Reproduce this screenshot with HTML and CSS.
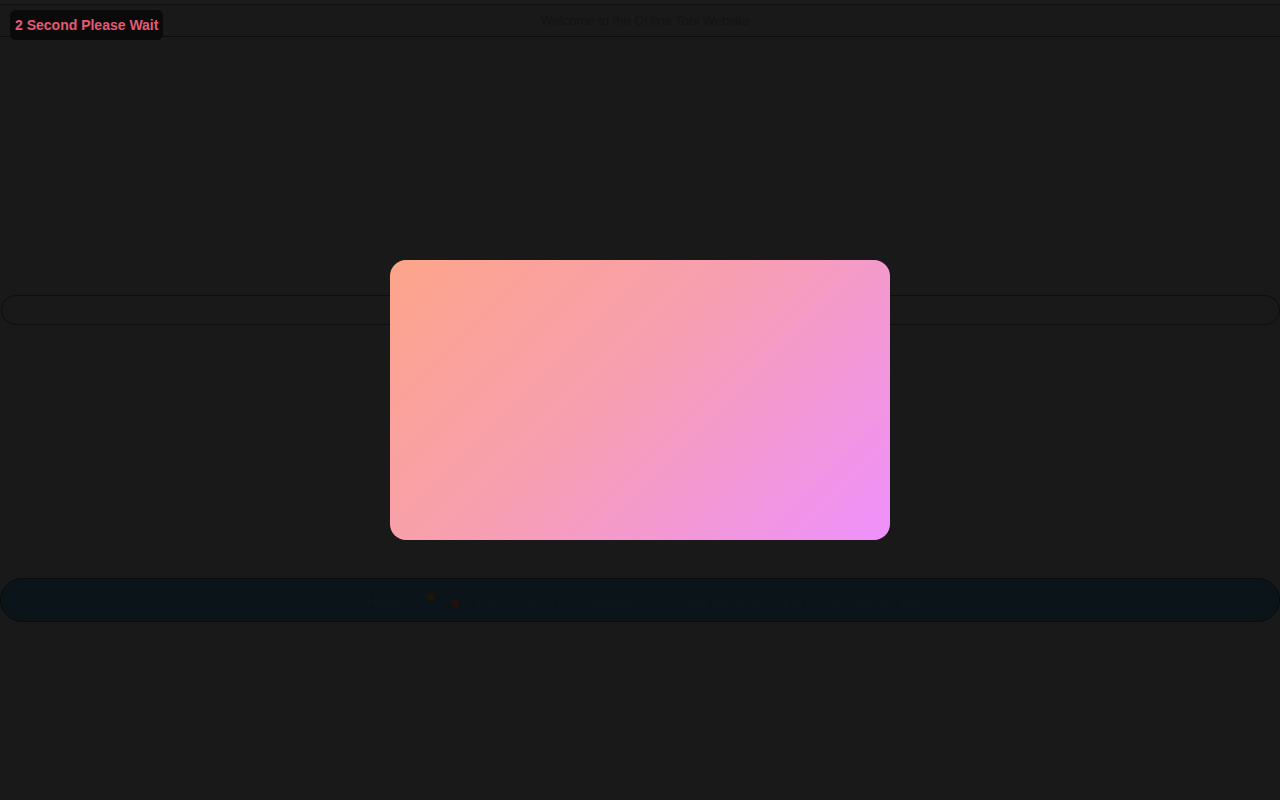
FILE: index.html
```html
<!DOCTYPE html>
<html lang="en">
<head>
<meta charset="utf-8">
<title>Please Wait</title>
<link rel="stylesheet" href="styles.css">
</head>
<body>
<div class="page">
  <div class="topstrip"></div>
  <header class="header">
    <span class="header-title">Welcome to the Online Tool Website</span>
  </header>
  <main class="content">
    <div class="hero"></div>
    <div class="search-pill"></div>
    <div class="spacer"></div>
    <div class="marquee-pill">
      <span class="marquee-text">Hello</span>
      <span class="dot dot-a"></span><span class="dot dot-b"></span>
      <span class="marquee-text">Welcome to our website, enjoy free tools and quick downloads here</span>
    </div>
  </main>
</div>
<div class="overlay"></div>
<div class="modal"></div>
<div class="wait-badge">2 Second Please Wait</div>
</body>
</html>
```
FILE: styles.css
```css
html, body {
  margin: 0;
  padding: 0;
  background: #191919;
  font-family: "Liberation Sans", Arial, sans-serif;
}
.page {
  width: 1280px;
  min-height: 800px;
  display: flex;
  flex-direction: column;
}
.topstrip {
  height: 4px;
  background: #1c1c1c;
  border-bottom: 1px solid #0e0e0e;
}
.header {
  height: 31px;
  border-bottom: 1px solid #0c0c0c;
  display: flex;
  align-items: center;
  justify-content: center;
  background: #191919;
}
.header-title {
  font-size: 13px;
  color: #131313;
  margin-left: 10px;
}
.content {
  display: flex;
  flex-direction: column;
}
.hero {
  height: 258px;
}
.search-pill {
  height: 28px;
  margin: 0 0 0 1px;
  border: 1px solid #0e0e0e;
  border-radius: 15px;
  background: #191919;
}
.spacer {
  height: 253px;
}
.marquee-pill {
  height: 42px;
  border: 1px solid #080c0e;
  border-radius: 22px;
  background: #0b1418;
  display: flex;
  align-items: center;
  justify-content: center;
  gap: 6px;
}
.dot {
  width: 8px;
  height: 8px;
  border-radius: 50%;
  display: inline-block;
}
.dot-a { background: #1e1508; margin-top: -6px; margin-left: 20px; }
.dot-b { background: #22100a; margin-top: 6px; margin-left: 10px; }
.marquee-text {
  font-size: 15px;
  color: #0d171c;
  margin-left: 10px;
}
.overlay {
  position: fixed;
  inset: 0;
  background: rgba(0, 0, 0, 0);
}
.modal {
  position: fixed;
  left: 390px;
  top: 260px;
  width: 500px;
  height: 280px;
  border-radius: 16px;
  background: linear-gradient(135deg, #fda589 0%, #f79fb0 45%, #ef90fd 100%);
}
.wait-badge {
  position: fixed;
  left: 10px;
  top: 10px;
  height: 30px;
  padding: 0 5px;
  display: flex;
  align-items: center;
  background: #0a0a0a;
  border-radius: 6px;
  color: #e45a72;
  font-weight: bold;
  font-size: 14px;
}
```
